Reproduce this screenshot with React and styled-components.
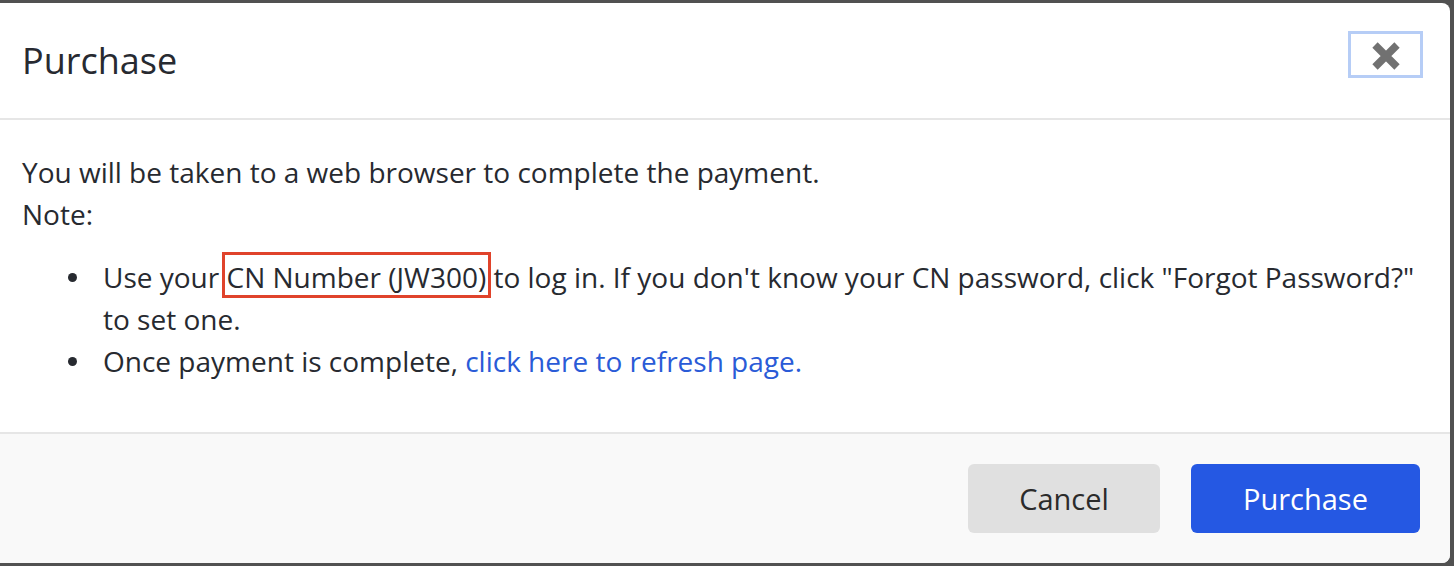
import React from "react";
import styled, { createGlobalStyle } from "styled-components";

const GlobalStyle = createGlobalStyle`
  html, body {
    margin: 0;
    padding: 0;
    background: #515151;
    font-family: "Open Sans", "Noto Sans", sans-serif;
  }
`;

const Backdrop = styled.div`
  height: 566px;
  box-sizing: border-box;
  padding: 3px 4px 3px 0;
  overflow: hidden;
`;

const Modal = styled.div`
  height: 100%;
  display: flex;
  flex-direction: column;
  background: #fff;
  border-radius: 0 8px 8px 0;
  overflow: hidden;
  color: #272a30;
`;

const Header = styled.header`
  height: 115px;
  flex-shrink: 0;
  display: flex;
  align-items: center;
  justify-content: space-between;
  padding: 0 27px 0 22px;
  border-bottom: 2px solid #e6e6e6;
`;

const Title = styled.h2`
  margin: 0;
  font-size: 36px;
  font-weight: 400;
  color: #272a31;
`;

const CloseButton = styled.button`
  width: 75px;
  height: 47px;
  margin-bottom: 13px;
  display: flex;
  align-items: center;
  justify-content: center;
  padding: 4px 0 0;
  background: #fff;
  border: 3px solid #b6cdf6;
  cursor: pointer;
`;

const Body = styled.section`
  flex: 1;
  padding: 31px 22px 0;
  font-size: 28px;
  line-height: 42px;
`;

const Line = styled.p`
  margin: 0;
`;

const Notes = styled.ul`
  margin: 21px 0 0;
  padding-left: 81px;
  list-style: none;
`;

const Note = styled.li`
  position: relative;

  &::before {
    content: "";
    position: absolute;
    left: -35px;
    top: 17px;
    width: 9px;
    height: 9px;
    border-radius: 50%;
    background: #272a30;
  }
`;

const Highlight = styled.span`
  position: relative;

  &::after {
    content: "";
    position: absolute;
    left: -5px;
    right: -5px;
    top: -6px;
    bottom: -2px;
    border: 3px solid #e0432b;
    pointer-events: none;
  }
`;

const TextLink = styled.a`
  color: #2a5bd7;
  text-decoration: none;
`;

const Footer = styled.footer`
  height: 131px;
  box-sizing: border-box;
  flex-shrink: 0;
  display: flex;
  justify-content: flex-end;
  align-items: center;
  gap: 31px;
  padding: 0 30px;
  background: #f9f9f9;
  border-top: 2px solid #e6e6e6;
`;

const Button = styled.button`
  height: 69px;
  width: ${(p) => p.$width}px;
  border: none;
  border-radius: 6px;
  font-family: inherit;
  font-size: 29px;
  background: ${(p) => (p.$primary ? "#2558e3" : "#e0e0e0")};
  color: ${(p) => (p.$primary ? "#fff" : "#2b2b2b")};
  cursor: pointer;
`;

const CloseIcon = () => (
  <svg width="30" height="30" viewBox="0 0 30 30">
    <path
      d="M4 4 L26 26 M26 4 L4 26"
      stroke="#717171"
      strokeWidth="7.5"
      strokeLinecap="butt"
    />
  </svg>
);

export default function App() {
  return (
    <>
      <GlobalStyle />
      <Backdrop>
        <Modal>
          <Header>
            <Title>Purchase</Title>
            <CloseButton aria-label="Close">
              <CloseIcon />
            </CloseButton>
          </Header>
          <Body>
            <Line>You will be taken to a web browser to complete the payment.</Line>
            <Line>Note:</Line>
            <Notes>
              <Note>
                Use your <Highlight>CN Number (JW300)</Highlight> to log in. If you
                don't know your CN password, click "Forgot Password?" to set one.
              </Note>
              <Note>
                Once payment is complete,{" "}
                <TextLink href="#">click here to refresh page.</TextLink>
              </Note>
            </Notes>
          </Body>
          <Footer>
            <Button $width={192}>Cancel</Button>
            <Button $width={229} $primary>
              Purchase
            </Button>
          </Footer>
        </Modal>
      </Backdrop>
    </>
  );
}
